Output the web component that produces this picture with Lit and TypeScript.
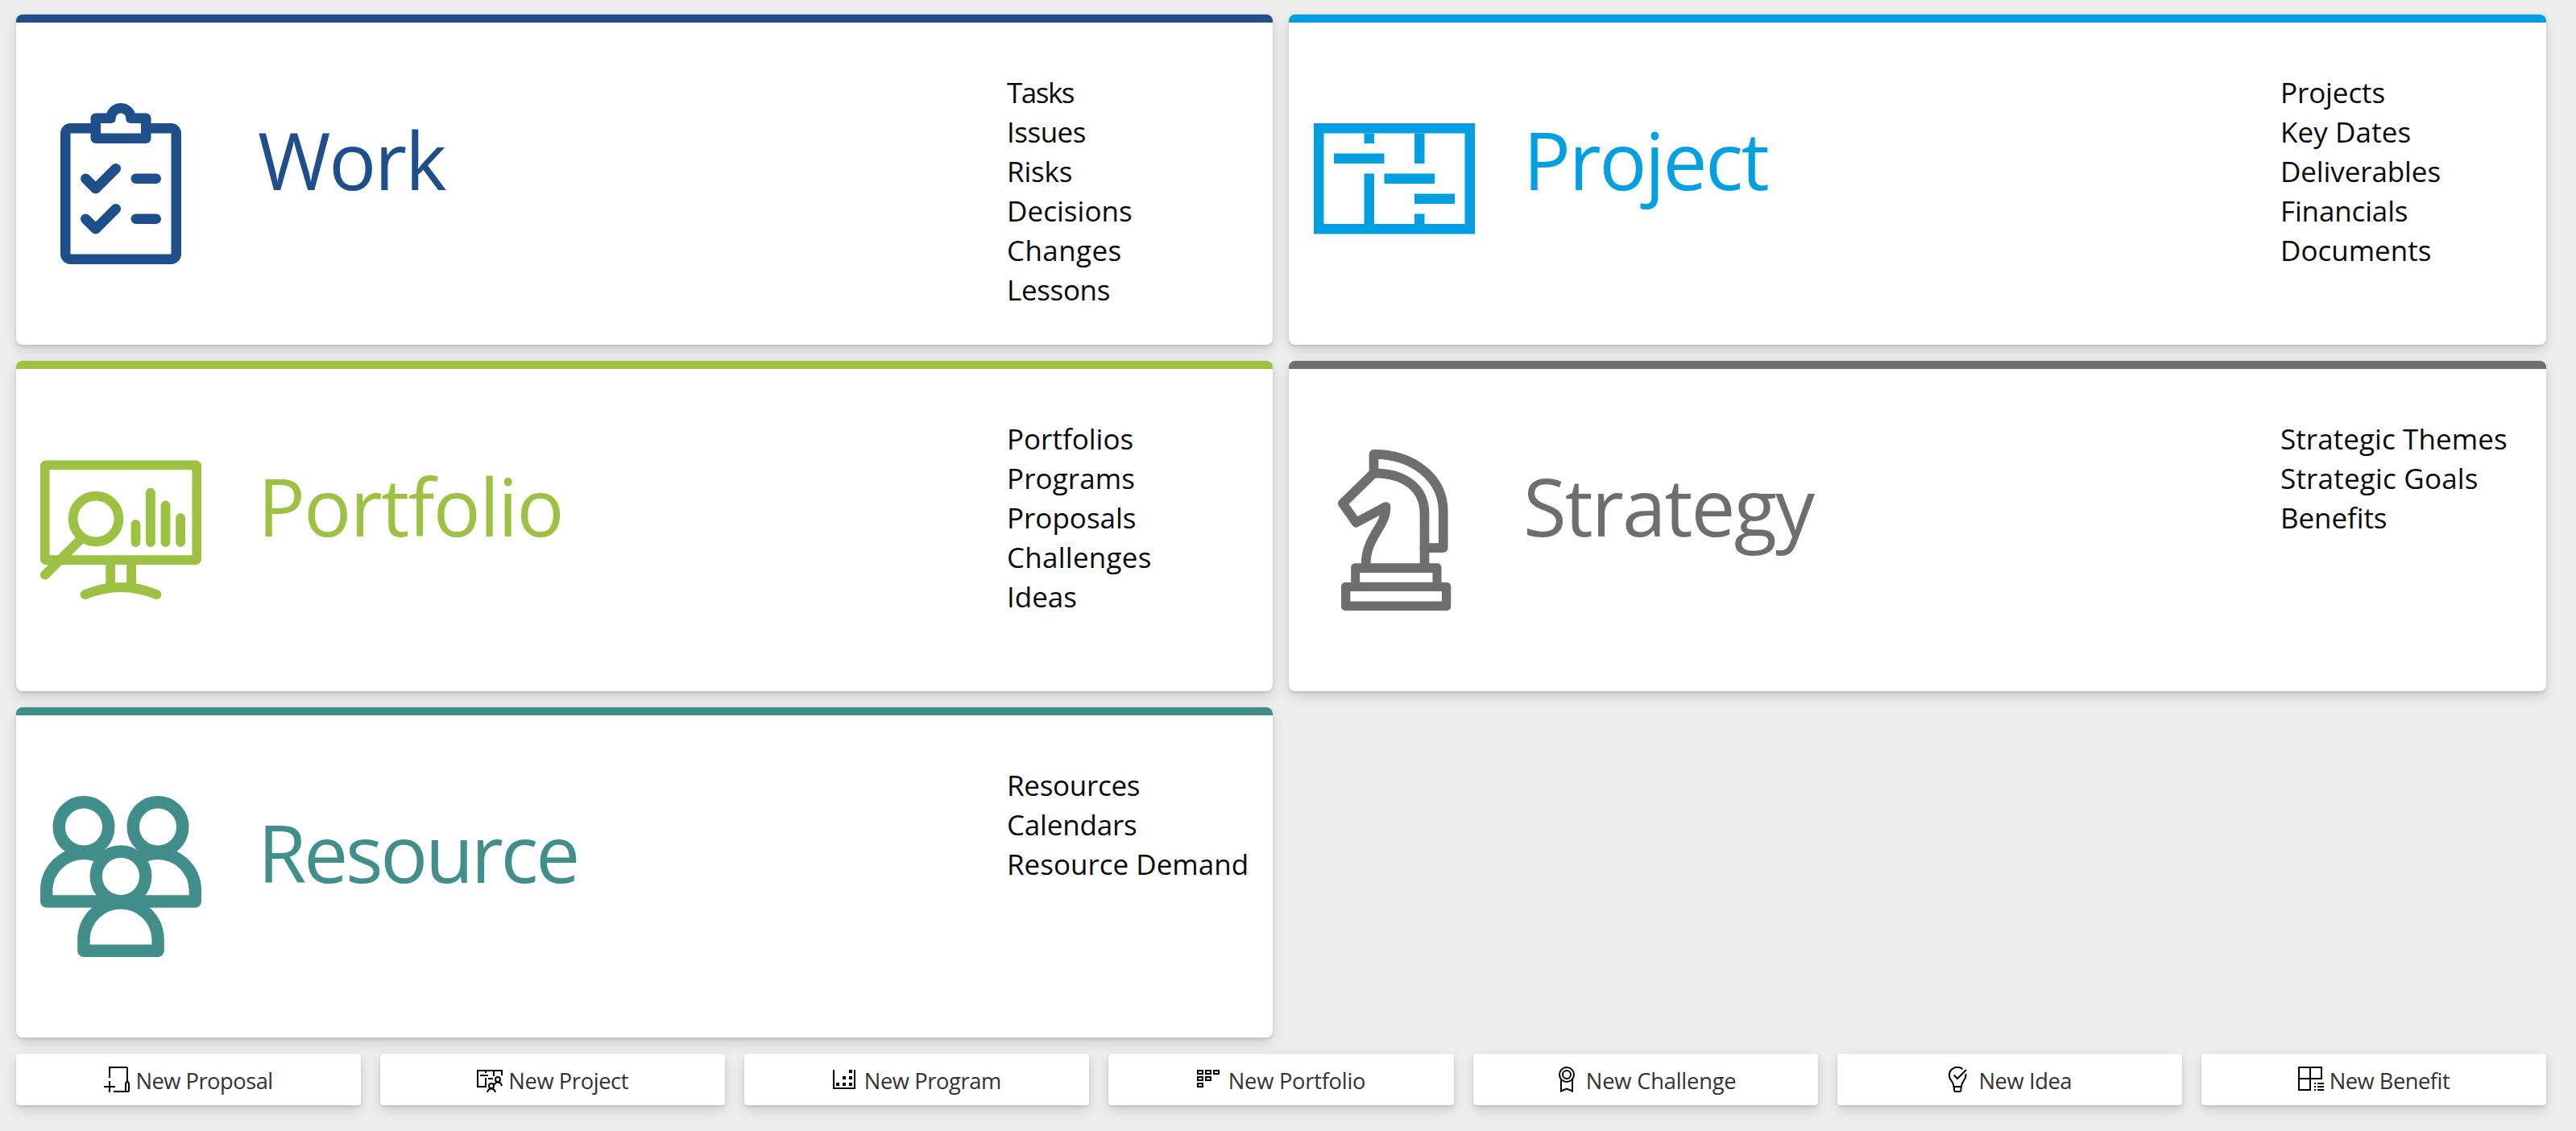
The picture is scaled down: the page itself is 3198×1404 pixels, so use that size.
import { LitElement, html, css, svg, TemplateResult } from "lit";
import { customElement, property } from "lit/decorators.js";
import { styleMap } from "lit/directives/style-map.js";

/** A label and the tracking (in px) that it is set with. */
type Label = [text: string, tracking: number];

interface Area {
  key: string;
  title: Label;
  links: Label[];
}

interface Action {
  icon: string;
  label: Label;
}

const AREAS: Area[] = [
  {
    key: "work",
    title: ["Work", -2.2],
    links: [["Tasks", -1.5], ["Issues", -0.5], ["Risks", -0.2], ["Decisions", 0.05], ["Changes", 0.4], ["Lessons", -0.35]],
  },
  {
    key: "project",
    title: ["Project", -2.3],
    links: [["Projects", -0.1], ["Key Dates", 0.1], ["Deliverables", -0.1], ["Financials", -0.15], ["Documents", 0]],
  },
  {
    key: "portfolio",
    title: ["Portfolio", -1.6],
    links: [["Portfolios", 0], ["Programs", 0.1], ["Proposals", 0], ["Challenges", 0.25], ["Ideas", 0]],
  },
  {
    key: "strategy",
    title: ["Strategy", -1.9],
    links: [["Strategic Themes", 0.08], ["Strategic Goals", 0.2], ["Benefits", -0.1]],
  },
  {
    key: "resource",
    title: ["Resource", -3.3],
    links: [["Resources", -0.3], ["Calendars", -0.2], ["Resource Demand", 0]],
  },
];

const ACTIONS: Action[] = [
  { icon: "proposal", label: ["New Proposal", -0.5] },
  { icon: "newProject", label: ["New Project", -0.4] },
  { icon: "program", label: ["New Program", -0.4] },
  { icon: "newPortfolio", label: ["New Portfolio", -0.25] },
  { icon: "challenge", label: ["New Challenge", -0.2] },
  { icon: "idea", label: ["New Idea", -0.4] },
  { icon: "benefit", label: ["New Benefit", -0.5] },
];

/** Large glyphs, drawn on a 200 unit square. */
const AREA_ICONS: Record<string, TemplateResult> = {
  work: svg`
    <path class="fill" fill-rule="evenodd" d="M37.5 25H162.5A12.5 12.5 0 0 1 175 37.5V187.5A12.5 12.5 0 0 1 162.5 200H37.5A12.5 12.5 0 0 1 25 187.5V37.5A12.5 12.5 0 0 1 37.5 25ZM37.5 37.5V187.5H162.5V37.5Z"/>
    <path class="fill" d="M68.75 12.5H82.3A18.8 18.8 0 0 1 117.7 12.5H131.25A6.25 6.25 0 0 1 137.5 18.75V43.75A6.25 6.25 0 0 1 131.25 50H68.75A6.25 6.25 0 0 1 62.5 43.75V18.75A6.25 6.25 0 0 1 68.75 12.5Z"/>
    <path class="paper" d="M75 25H87.5Q93.75 25 93.75 18.75A6.25 6.25 0 0 1 106.25 18.75Q106.25 25 112.5 25H125V37.5H75Z"/>
    <g class="line" stroke-width="12.5">
      <path d="M56.25 93.75L68.75 106.25L93.75 81.25M118.75 93.75H143.75"/>
      <path d="M56.25 143.75L68.75 156.25L93.75 131.25M118.75 143.75H143.75"/>
    </g>`,
  project: svg`
    <path class="fill" fill-rule="evenodd" d="M0 25H200V162.5H0ZM12.5 37.5V150H187.5V37.5Z"/>
    <path class="fill" d="M62.5 37.5H75V50H62.5ZM62.5 87.5H75V150H62.5ZM125 37.5H137.5V75H125ZM125 137.5H137.5V150H125ZM25 62.5H87.5V75H25ZM87.5 87.5H150V100H87.5ZM125 112.5H175V125H125Z"/>`,
  portfolio: svg`
    <path class="fill" fill-rule="evenodd" d="M7 13.5H193A7 7 0 0 1 200 20.5V136A7 7 0 0 1 193 143H7A7 7 0 0 1 0 136V20.5A7 7 0 0 1 7 13.5ZM11.6 25.3V131.3H188.4V25.3Z"/>
    <g class="line" stroke-width="11.8">
      <circle cx="69" cy="86" r="28.4"/>
      <path d="M48.9 112.7L5.9 155.7"/>
      <path d="M118.5 93V115M136.9 53.7V115M155.5 69.3V115M174.1 85V115"/>
      <path d="M55.6 180Q100 162 144.4 180"/>
    </g>
    <path class="fill" d="M81.3 142H93V168L81.3 170ZM107.2 142H119V170L107.2 168Z"/>`,
  strategy: svg`
    <path class="fill" fill-rule="evenodd" d="M39 165H165.3A5 5 0 0 1 170.3 170V195A5 5 0 0 1 165.3 200H39A5 5 0 0 1 34 195V170A5 5 0 0 1 39 165ZM45.4 176V188.4H159V176Z"/>
    <path class="fill" fill-rule="evenodd" d="M51 141.3H153.5A5 5 0 0 1 158.5 146.3V166H46.2V146.3A5 5 0 0 1 51 141.3ZM57.2 153V164.8H147.5V153Z"/>
    <g class="line" stroke-width="11.7">
      <path d="M74.5 29V5.9C124 5.9 160.7 36 160.7 77V122.2H137.5"/>
      <path d="M64.6 143C64.6 108 90 96 89.5 71L52.6 90.7L35.9 67L74.5 29.3C112 29.3 137.5 47 137.5 80V143"/>
    </g>`,
  resource: svg`
    <g class="line" stroke-width="15.4">
      <circle cx="54" cy="38.5" r="30.8"/>
      <circle cx="146" cy="38.5" r="30.8"/>
      <path d="M100 131H7.7V115.4A46.2 46.2 0 0 1 100 115.4"/>
      <path d="M100 131H192.3V115.4A46.2 46.2 0 0 0 100 115.4"/>
      <path class="paper" d="M53.9 192.3V176.9A46.15 46.15 0 0 1 146.1 176.9V192.3Z"/>
      <circle class="paper" cx="100" cy="99.8" r="30.8"/>
    </g>`,
};

/** Small glyphs, drawn on a 32 unit square with 2 unit strokes. */
const ACTION_ICONS: Record<string, TemplateResult> = {
  proposal: svg`
    <path d="M7 14V1H28Q29 1 29 2V18M0 25H14M7 18V32M12 31H30Q31 31 31 29.5V22Q31 20 29 18Q27 20 27 22V30"/>`,
  newProject: svg`
    <path d="M12 25H1V5H31V11M11 5V8M21 5V12M4 11H14M11 14V25M14 15H20"/>
    <circle cx="26" cy="16" r="3"/>
    <path d="M21.5 22.5Q23 19.5 26 19.5Q30 19.5 31 24"/>
    <circle cx="18" cy="24" r="3"/>
    <path d="M13 32Q14 27.5 18 27.5Q22 27.5 23 32"/>`,
  program: svg`
    <path d="M1 4V27H27V4"/>
    <path class="solid" d="M4 20h4v4h-4zM12 20h4v4h-4zM20 20h4v4h-4zM12 12h4v4h-4zM20 12h4v4h-4zM20 4h4v4h-4z"/>`,
  newPortfolio: svg`
    <path d="M1 5h6v4h-6zM11 5h6v4h-6zM21 5h6v4h-6zM1 13h6v4h-6zM11 13h6v4h-6zM1 21h6v4h-6z"/>`,
  challenge: svg`
    <circle cx="15" cy="10" r="9"/>
    <circle cx="15" cy="10" r="5"/>
    <path d="M8 16V30.5L15 27.5L22 30.5V16"/>`,
  idea: svg`
    <path d="M19.5 3.2A10 10 0 0 0 3 11.5C3 17 8.5 18.5 8.5 25H18C18 18.5 23.500 17 23.5 11V9"/>
    <path d="M8.7 10.5L13 15L24 4M9 25V29Q9 31 11 31H15.5Q17.5 31 17.5 29V25"/>`,
  benefit: svg`
    <path d="M1 1H29V15H1ZM15 1V29H1V15M20 21H22M24 21H32M20 25H22M24 25H32M20 29H22M24 29H32"/>`,
};

const track = ([, tracking]: Label) => styleMap({ letterSpacing: `${tracking}px` });

@customElement("area-card")
export class AreaCard extends LitElement {
  @property({ attribute: false }) area!: Area;

  static styles = css`
    :host {
      display: block;
    }
    .card {
      box-sizing: border-box;
      height: 410px;
      display: flex;
      align-items: flex-start;
      padding: 0 30px;
      border-top: 10px solid var(--accent);
      border-radius: 8px;
      background: #fff;
      color: var(--accent);
      box-shadow: 0 6.4px 14.4px 0 rgba(0, 0, 0, 0.132), 0 1.2px 3.6px 0 rgba(0, 0, 0, 0.108);
    }
    .work { --accent: #1f4f8a; }
    .project { --accent: #009fe1; }
    .portfolio { --accent: #9dc143; }
    .strategy { --accent: #6e6e6e; }
    .resource { --accent: #428e8b; }
    .icon {
      flex: none;
      width: 200px;
      height: 200px;
      margin: 100px 70px 0 0;
    }
    .project .icon,
    .strategy .icon {
      margin-left: 1px;
      margin-right: 60px;
    }
    .title {
      flex: 1;
      margin: 120px 0 0;
      font-size: 98px;
      font-weight: 400;
      line-height: 100px;
      white-space: nowrap;
    }
    .links {
      flex: none;
      width: 300px;
      margin: 62px 0 0;
      padding: 0;
      list-style: none;
      color: #0a0a0a;
      font-size: 35px;
      line-height: 49px;
      white-space: nowrap;
    }
    .fill { fill: currentColor; }
    .line {
      fill: none;
      stroke: currentColor;
      stroke-linecap: round;
      stroke-linejoin: round;
    }
    .paper { fill: #fff; }
  `;

  render() {
    const { key, title, links } = this.area;
    return html`
      <section class="card ${key}">
        <svg class="icon" viewBox="0 0 200 200">${AREA_ICONS[key]}</svg>
        <h2 class="title" style=${track(title)}>${title[0]}</h2>
        <ul class="links">
          ${links.map((link) => html`<li style=${track(link)}>${link[0]}</li>`)}
        </ul>
      </section>
    `;
  }
}

@customElement("action-button")
export class ActionButton extends LitElement {
  @property({ attribute: false }) action!: Action;

  static styles = css`
    :host {
      display: block;
    }
    .button {
      box-sizing: border-box;
      width: 100%;
      height: 64px;
      display: flex;
      align-items: center;
      justify-content: center;
      gap: 7px;
      padding: 0;
      border: 0;
      border-radius: 4px;
      background: #fff;
      color: #333;
      font: inherit;
      font-size: 27.3px;
      line-height: 60px;
      white-space: nowrap;
      box-shadow: 0 6.4px 14.4px 0 rgba(0, 0, 0, 0.132), 0 1.2px 3.6px 0 rgba(0, 0, 0, 0.108);
    }
    .icon {
      flex: none;
      width: 32px;
      height: 32px;
      fill: none;
      stroke: #000;
      stroke-width: 2;
    }
    .solid {
      fill: #000;
      stroke: none;
    }
    .label {
      padding-top: 4px;
    }
  `;

  render() {
    const { icon, label } = this.action;
    return html`
      <button class="button">
        <svg class="icon" viewBox="0 0 32 32">${ACTION_ICONS[icon]}</svg>
        <span class="label" style=${track(label)}>${label[0]}</span>
      </button>
    `;
  }
}

@customElement("app-root")
export class AppRoot extends LitElement {
  static styles = css`
    :host {
      display: block;
      font-family: "Open Sans", "Noto Sans", sans-serif;
    }
    .page {
      box-sizing: border-box;
      min-height: 100vh;
      display: flex;
      flex-direction: column;
      gap: 20px;
      padding: 18px 37px 32px 20px;
      background: #eee;
    }
    .areas {
      display: grid;
      grid-template-columns: 1560px 1561px;
      gap: 20px;
    }
    .actions {
      display: grid;
      grid-template-columns: repeat(7, 1fr);
      gap: 24px;
    }
  `;

  render() {
    return html`
      <main class="page">
        <div class="areas">${AREAS.map((area) => html`<area-card .area=${area}></area-card>`)}</div>
        <div class="actions">
          ${ACTIONS.map((action) => html`<action-button .action=${action}></action-button>`)}
        </div>
      </main>
    `;
  }
}
